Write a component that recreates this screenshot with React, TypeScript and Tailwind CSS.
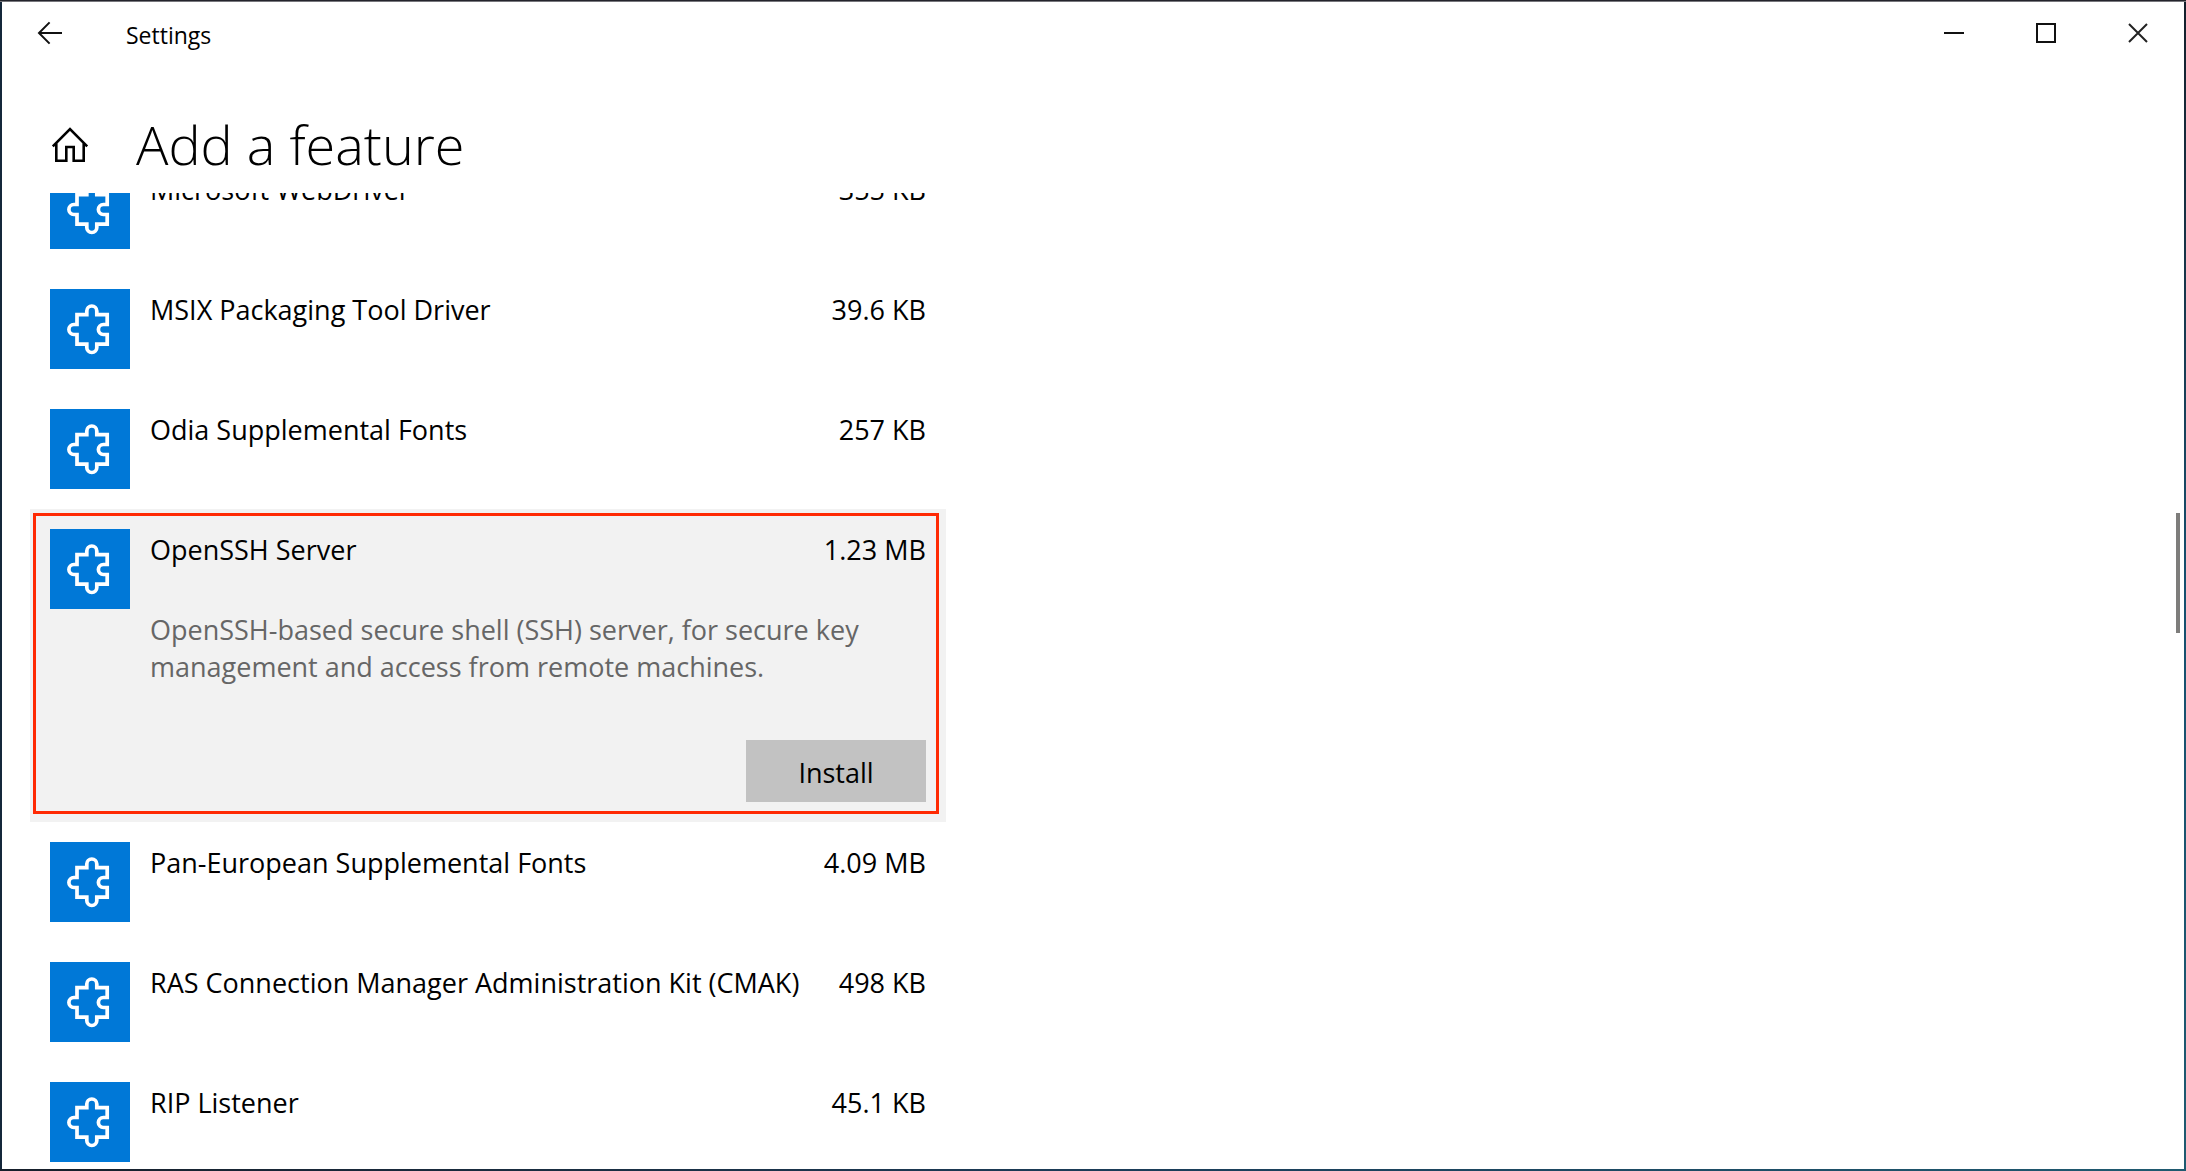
import React from "react";

type Feature = {
  name: string;
  size: string;
  description?: string;
};

const features: Feature[] = [
  { name: "Microsoft WebDriver", size: "355 KB" },
  { name: "MSIX Packaging Tool Driver", size: "39.6 KB" },
  { name: "Odia Supplemental Fonts", size: "257 KB" },
  {
    name: "OpenSSH Server",
    size: "1.23 MB",
    description:
      "OpenSSH-based secure shell (SSH) server, for secure key management and access from remote machines.",
  },
  { name: "Pan-European Supplemental Fonts", size: "4.09 MB" },
  { name: "RAS Connection Manager Administration Kit (CMAK)", size: "498 KB" },
  { name: "RIP Listener", size: "45.1 KB" },
];

function PuzzleTile() {
  return (
    <span className="size-20 shrink-0 bg-[#0078d7]">
      <svg viewBox="0 0 80 80" className="size-20" fill="none" stroke="white" strokeWidth="3.7" aria-hidden="true">
        <path d="M27 25.7H36.8V22a5 5 0 0 1 10 0V25.7H57.2V35.5H53.4a5 5 0 0 0 0 10H57.2V55.2H46.8V58.5a5 5 0 0 1-10 0V55.2H27V45.5H23.9a5 5 0 0 1 0-10H27Z" />
      </svg>
    </span>
  );
}

function FeatureRow({ feature }: { feature: Feature }) {
  const open = Boolean(feature.description);
  return (
    <li className={open ? "relative flex gap-5 bg-[#f2f2f2] p-5" : "relative flex gap-5 p-5"}>
      <PuzzleTile />
      <div className="flex min-w-0 grow flex-col pt-[2px]">
        <div className="flex justify-between gap-4 whitespace-nowrap">
          <h2>{feature.name}</h2>
          <span>{feature.size}</span>
        </div>
        {open && (
          <>
            <p className="mt-[43px] text-[#666666]">{feature.description}</p>
            <button
              type="button"
              className="mt-[55px] h-[62px] w-[180px] self-end bg-[#c2c2c2] pt-[2px]"
            >
              Install
            </button>
          </>
        )}
      </div>
      {open && (
        <div className="pointer-events-none absolute top-1 right-[7px] bottom-2 left-[3px] border-3 border-[#ff2a04]" />
      )}
    </li>
  );
}

function TitleBar() {
  return (
    <header className="flex h-[62px] shrink-0 items-center">
      <button type="button" aria-label="Back" className="flex h-full w-24 items-center justify-center">
        <svg viewBox="0 0 28 28" className="size-7" fill="none" stroke="#111" strokeWidth="2" aria-hidden="true">
          <path d="M26 14H3M13.6 3.4L3 14l10.6 10.6" />
        </svg>
      </button>
      <span className="grow pt-1 pl-7 text-[23px]">Settings</span>
      <button type="button" aria-label="Minimize" className="flex h-full w-[92px] items-center justify-center">
        <svg viewBox="0 0 20 20" className="size-5" stroke="#111" strokeWidth="2" aria-hidden="true">
          <path d="M0 10H20" />
        </svg>
      </button>
      <button type="button" aria-label="Maximize" className="flex h-full w-[92px] items-center justify-center">
        <svg viewBox="0 0 20 20" className="size-5" fill="none" stroke="#111" strokeWidth="2" aria-hidden="true">
          <path d="M1 1H19V19H1Z" />
        </svg>
      </button>
      <button type="button" aria-label="Close" className="flex h-full w-[92px] items-center justify-center">
        <svg viewBox="0 0 20 20" className="size-5" stroke="#222" strokeWidth="2" aria-hidden="true">
          <path d="M1 1L19 19M19 1L1 19" />
        </svg>
      </button>
    </header>
  );
}

export default function App() {
  return (
    <div className="flex h-screen flex-col bg-[#14273a] font-['Open_Sans',sans-serif] text-black">
      <div className="h-[2px] shrink-0 border-b border-[#77777c] bg-[#24242c]" />
      <div className="flex min-h-0 grow">
        <div className="w-[2px] shrink-0 bg-[#14273a]" />
        <div className="flex min-w-0 grow flex-col overflow-hidden bg-white font-[370]">
          <TitleBar />
          <div className="flex h-[129px] shrink-0 items-center pt-[33px] pl-12">
            <button type="button" aria-label="Home">
              <svg viewBox="0 0 40 40" className="size-10" fill="none" stroke="black" strokeWidth="2.6" aria-hidden="true">
                <path d="M2.8 21.3L20 4.1L37.2 21.3M6.3 18V35.7H16.3V22H23.7V35.7H33.7V18" />
              </svg>
            </button>
            <h1 className="ml-[46px] pb-[2px] text-[54px] leading-none font-[350]">Add a feature</h1>
          </div>
          <main className="relative min-h-0 grow overflow-hidden">
            <ul className="-mt-11 ml-7 w-[916px] max-w-full text-[27px] leading-[37px]">
              {features.map((f) => (
                <FeatureRow key={f.name} feature={f} />
              ))}
            </ul>
            <div className="absolute top-80 right-1 h-[120px] w-1 bg-[#7e7d7b]" />
          </main>
        </div>
        <div className="w-[2px] shrink-0 bg-linear-to-b from-[#14202c] via-[#17506f] via-50% to-[#1f5a70]" />
      </div>
      <div className="h-[2px] shrink-0 bg-linear-to-r from-[#161f2b] via-[#1b3c58] via-50% to-[#1f5a70]" />
    </div>
  );
}
